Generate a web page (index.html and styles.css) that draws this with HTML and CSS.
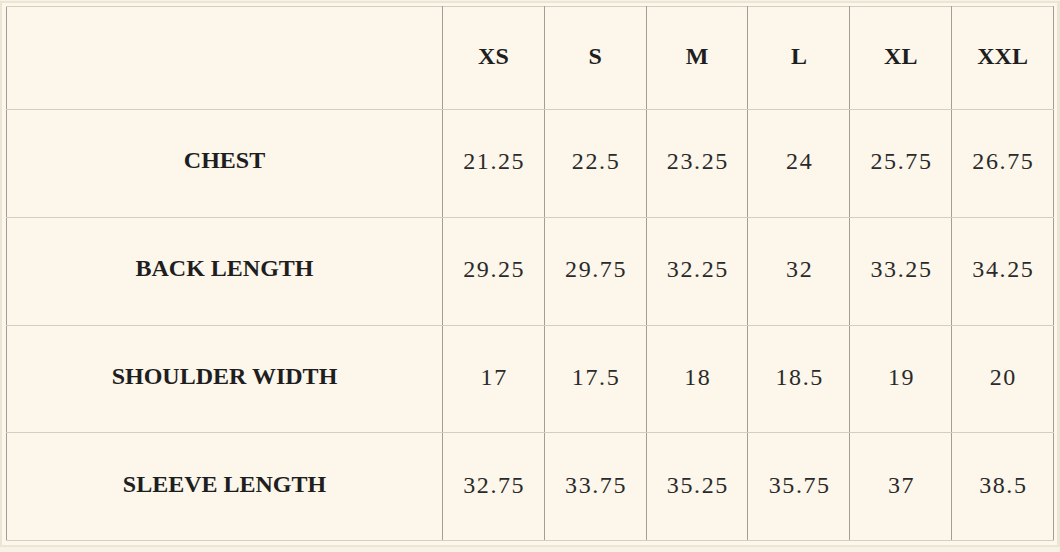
FILE: index.html
```html
<!DOCTYPE html>
<html lang="en">
<head>
<meta charset="utf-8">
<title>Size Chart</title>
<link rel="stylesheet" href="styles.css">
</head>
<body>
<div class="frame">
  <table class="sizes">
    <thead>
      <tr class="head-row">
        <th class="label-col"></th>
        <th>XS</th><th>S</th><th>M</th><th>L</th><th>XL</th><th>XXL</th>
      </tr>
    </thead>
    <tbody>
      <tr>
        <th class="label-col">CHEST</th>
        <td>21.25</td><td>22.5</td><td>23.25</td><td>24</td><td>25.75</td><td>26.75</td>
      </tr>
      <tr>
        <th class="label-col">BACK LENGTH</th>
        <td>29.25</td><td>29.75</td><td>32.25</td><td>32</td><td>33.25</td><td>34.25</td>
      </tr>
      <tr>
        <th class="label-col">SHOULDER WIDTH</th>
        <td>17</td><td>17.5</td><td>18</td><td>18.5</td><td>19</td><td>20</td>
      </tr>
      <tr>
        <th class="label-col">SLEEVE LENGTH</th>
        <td>32.75</td><td>33.75</td><td>35.25</td><td>35.75</td><td>37</td><td>38.5</td>
      </tr>
    </tbody>
  </table>
</div>
</body>
</html>
```
FILE: styles.css
```css
html, body {
  margin: 0;
  padding: 0;
  background: #f8f2e5;
}

.frame {
  margin-top: 1px;
  width: 1060px;
  box-sizing: border-box;
  border: 2px solid #ebe5d5;
  border-right-width: 3px;
  padding: 3px 1px 4px 4px;
  background: #fcf6eb;
}

.sizes {
  width: 1048px;
  height: 535px;
  border-collapse: collapse;
  table-layout: fixed;
  background: #fcf6eb;
  font-family: "Liberation Serif", "Times New Roman", serif;
  font-size: 24px;
  color: #1b1b1b;
  border: 1px solid #b9b5ab;
}

.sizes th,
.sizes td {
  text-align: center;
  vertical-align: middle;
  padding: 0;
  border-left: 1px solid #a19e97;
  border-right: 1px solid #a19e97;
  border-top: 1px solid #d3cec2;
  border-bottom: 1px solid #d3cec2;
}

.sizes th {
  font-weight: 700;
  color: #1e1e1e;
  padding-bottom: 5px;
}

.sizes td {
  font-weight: 400;
  color: #2a2a2a;
  letter-spacing: 1.6px;
  padding-left: 1.6px;
  padding-bottom: 3px;
}

.label-col {
  width: 435px;
}

.head-row {
  height: 103px;
}

.head-row th {
  padding-bottom: 4px;
}

.sizes tbody tr {
  height: 107px;
}
```
